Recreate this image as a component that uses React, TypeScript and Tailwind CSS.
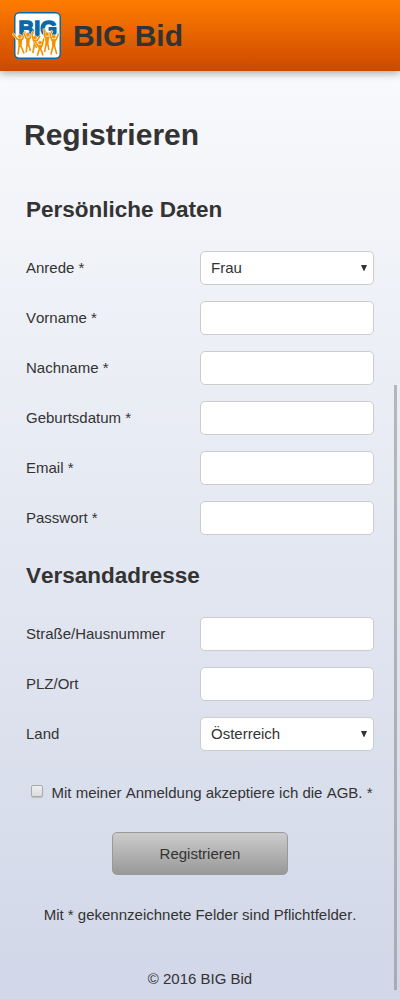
import React from "react";

type FieldProps = { label: string; option?: string };

function Field({ label, option }: FieldProps) {
  const box =
    "h-[34px] w-full appearance-none rounded-[5px] border border-[#cccccc] bg-white px-[10px] text-[15px] text-[#333333] outline-none";
  return (
    <label className="flex h-[34px] items-center">
      <span className="w-[174px]">{label}</span>
      <span className="relative block w-[174px]">
        {option ? (
          <>
            <select className={box} defaultValue={option}>
              <option>{option}</option>
            </select>
            <svg className="absolute top-[14px] right-[7px]" width="6" height="6" viewBox="0 0 6 6">
              <path d="M0 0h6L3.3 6h-.6z" fill="#333" />
            </svg>
          </>
        ) : (
          <input className={box} type="text" />
        )}
      </span>
    </label>
  );
}

type PersonProps = { head: [number, number]; arms: string; body: string; legs: string };

const people: PersonProps[] = [
  { head: [19.8, 36.3], arms: "M12.8 33.3 17.3 39.3H22.5L25.3 31.5", body: "M18 39h4.3l-.8 8h-3z", legs: "M19.2 46 18 54.5M21 46l3 7.5" },
  { head: [27.8, 34.5], arms: "M23.6 32.5 26 38.3h4L33.3 31", body: "M26 38h4l-.8 8h-2.8z", legs: "M27 45l-.8 7.5M28.8 45l1.6 6" },
  { head: [35, 37.7], arms: "M32 34.5 33.5 40.5h3.7L40 36", body: "M33.3 40h3.6l-.6 6h-2.6z", legs: "M34.3 45 32.8 53M35.8 45l.6 3" },
  { head: [47, 34.2], arms: "M43.8 28.5 45 37.5h4L52.3 30.5", body: "M45 37h4.2l-.9 8.5h-2.8z", legs: "M46 44.5 44.6 52M48 44.5l.8 5.5" },
  { head: [53.8, 36.7], arms: "M49.8 33 51.7 40H56L58.6 33.5", body: "M51.7 39.5H56l-1 8h-2.8z", legs: "M52.8 46.5 51 54.5M54.6 46.5l2.2 7.5" },
  { head: [40, 42.7], arms: "M35.2 41.5 38 46h4L43.8 38.5", body: "M38 45.5h4.2l-.8 5h-2.6z", legs: "M39 50l-1.7 5.8M41.2 50l1.8 5.5" },
];

function Person({ head, arms, body, legs }: PersonProps) {
  return (
    <g>
      <path d={`${arms}${legs}`} fill="none" stroke="#fff" strokeWidth="2.5" strokeLinejoin="round" />
      <circle cx={head[0]} cy={head[1]} r="2.1" fill="#f39200" stroke="#fff" strokeWidth=".5" />
      <path d={`${arms}${legs}`} fill="none" stroke="#f39200" strokeWidth="1.6" strokeLinejoin="round" />
      <path d={body} fill="#f39200" />
    </g>
  );
}

function Logo() {
  return (
    <svg className="ml-3 shrink-0" width="50" height="50" viewBox="12 11 50 50">
      <rect x="14.75" y="12.75" width="45.5" height="45.5" rx="4.5" fill="#fff" stroke="#0868a8" strokeWidth="1.5" />
      <text
        x="18.6"
        y="36"
        textLength="38.4"
        lengthAdjust="spacingAndGlyphs"
        fill="#0868a8"
        stroke="#0868a8"
        strokeWidth="1.4"
        className="font-['Liberation_Sans',Arial,sans-serif] text-[22px] font-bold"
      >
        BIG
      </text>
      {people.map((person, i) => (
        <Person key={i} {...person} />
      ))}
    </svg>
  );
}

export default function App() {
  return (
    <div className="relative flex h-[999px] w-full flex-col overflow-hidden bg-linear-to-b from-[#fbfcfd] to-[#d1d7e8] font-['Liberation_Sans',Arial,sans-serif] text-[15px] leading-[18px] text-[#333333] [font-kerning:none]">
      <header className="flex h-[71px] shrink-0 items-center bg-linear-to-b from-[#ff7c00] to-[#cc4900] shadow-[0_2px_8px_rgba(0,0,0,0.35)]">
        <Logo />
        <span className="ml-[11px] text-[30px] leading-[34px] font-bold">BIG Bid</span>
      </header>
      <main>
        <h1 className="mt-[47px] ml-6 text-[30px] leading-[34px] font-bold">Registrieren</h1>
        <form className="px-[26px]">
          <h2 className="mt-[45px] text-[22.5px] leading-[26px] font-bold">Persönliche Daten</h2>
          <div className="mt-7 flex flex-col gap-4">
            <Field label="Anrede *" option="Frau" />
            <Field label="Vorname *" />
            <Field label="Nachname *" />
            <Field label="Geburtsdatum *" />
            <Field label="Email *" />
            <Field label="Passwort *" />
          </div>
          <h2 className="mt-7 text-[22.5px] leading-[26px] font-bold">Versandadresse</h2>
          <div className="mt-7 flex flex-col gap-4">
            <Field label="Straße/Hausnummer" />
            <Field label="PLZ/Ort" />
            <Field label="Land" option="Österreich" />
          </div>
          <label className="mt-[33px] flex h-[18px] items-start pl-[5px] whitespace-nowrap">
            <input
              type="checkbox"
              className="mt-px mr-[8.5px] size-3 shrink-0 appearance-none rounded-[2px] border border-[#aaaaaa] bg-linear-to-b from-[#eeeeee] to-[#dcdcdc] shadow-[0_1px_1px_rgba(0,0,0,0.15)]"
            />
            <span>Mit meiner Anmeldung akzeptiere ich die AGB. *</span>
          </label>
          <button
            type="button"
            className="mx-auto mt-[30px] block h-[43px] w-[176px] rounded-[5px] border border-[#999999] bg-linear-to-b from-[#cccccc] to-[#999999]"
          >
            Registrieren
          </button>
        </form>
        <p className="mt-[31px] text-center">Mit * gekennzeichnete Felder sind Pflichtfelder.</p>
      </main>
      <footer className="mt-[46px] text-center">© 2016 BIG Bid</footer>
      <div className="absolute top-[385px] right-[3px] h-[605px] w-[3px] bg-[#808080]/50" />
    </div>
  );
}
